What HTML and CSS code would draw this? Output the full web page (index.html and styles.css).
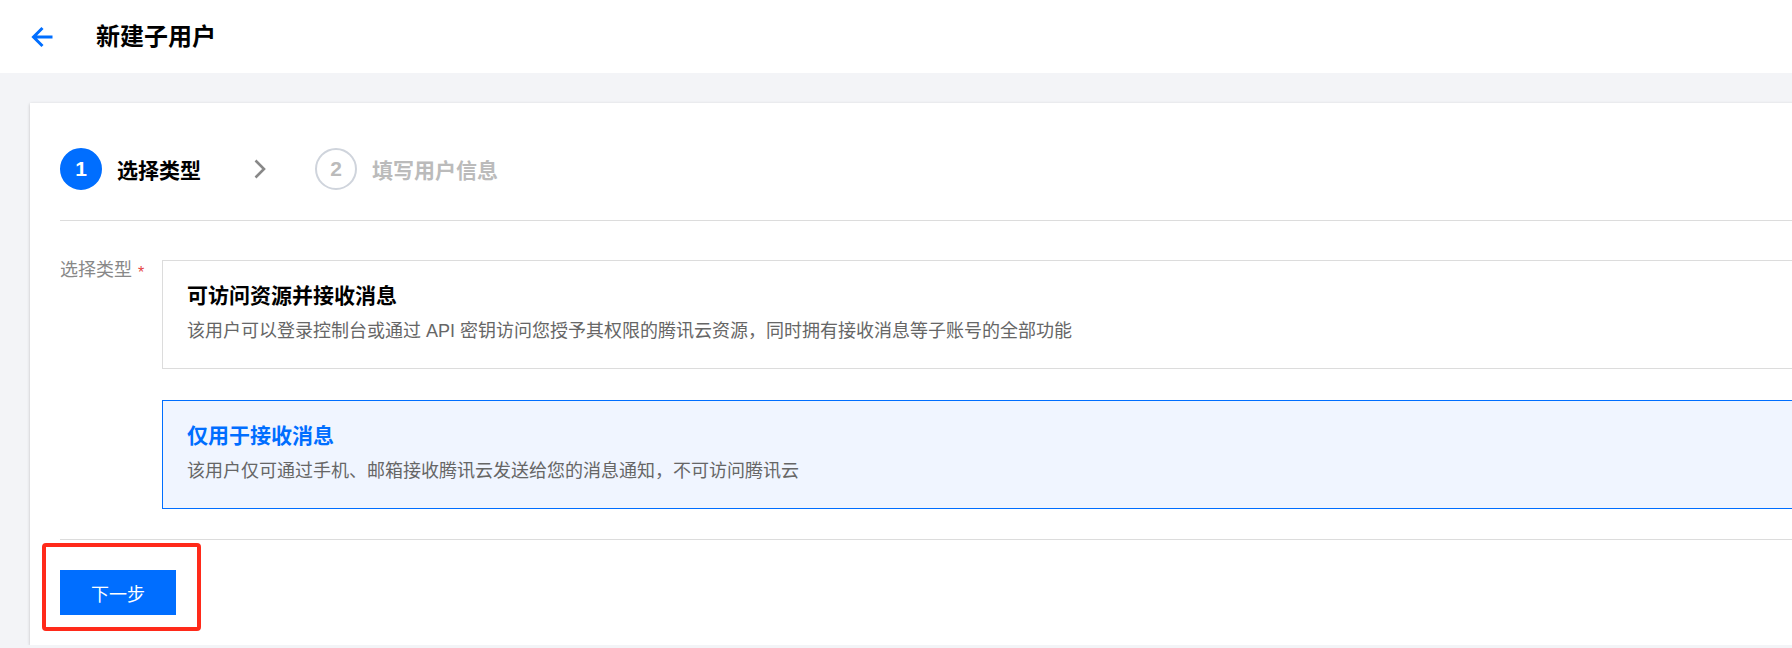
FILE: index.html
```html
<!DOCTYPE html>
<html lang="zh-CN">
<head>
    <meta charset="UTF-8">
    <meta name="viewport" content="width=device-width, initial-scale=1.0">
    <title>新建子用户</title>
    <link rel="stylesheet" href="styles.css">
</head>
<body>
    <div class="header">
        <svg class="back" width="22" height="22" viewBox="0 0 22 22">
            <path d="M21.5 11H3M11.5 2L2.5 11L11.5 20" fill="none" stroke="#006eff" stroke-width="3"/>
        </svg>
        <h1>新建子用户</h1>
    </div>
    <div class="main">
        <div class="card">
            <div class="steps">
                <div class="step active">
                    <span class="step-num">1</span>
                    <span class="step-label">选择类型</span>
                </div>
                <svg class="step-arrow" width="14" height="20" viewBox="0 0 14 20">
                    <path d="M2.5 1.5L11 10L2.5 18.5" fill="none" stroke="#888" stroke-width="2.6"/>
                </svg>
                <div class="step">
                    <span class="step-num">2</span>
                    <span class="step-label">填写用户信息</span>
                </div>
            </div>
            <div class="form">
                <div class="form-label">选择类型<span class="required">*</span></div>
                <div class="options">
                    <div class="option">
                        <div class="option-title">可访问资源并接收消息</div>
                        <div class="option-desc">该用户可以登录控制台或通过 API 密钥访问您授予其权限的腾讯云资源，同时拥有接收消息等子账号的全部功能</div>
                    </div>
                    <div class="option selected">
                        <div class="option-title">仅用于接收消息</div>
                        <div class="option-desc">该用户仅可通过手机、邮箱接收腾讯云发送给您的消息通知，不可访问腾讯云</div>
                    </div>
                </div>
            </div>
            <div class="footer">
                <button class="btn-primary">下一步</button>
                <div class="mark"></div>
            </div>
        </div>
    </div>
</body>
</html>
```

FILE: styles.css
```css
body {
    margin: 0;
    font-family: "Liberation Sans", "Noto Sans CJK SC", sans-serif;
    background-color: #f3f4f7;
    overflow: hidden;
}

.header {
    height: 73px;
    background-color: #fff;
    display: flex;
    align-items: center;
    padding-left: 31px;
}

.back {
    display: block;
    margin-top: 1px;
}

.header h1 {
    margin: 0 0 0 43px;
    font-size: 24px;
    font-weight: bold;
    line-height: 34px;
    color: #000;
}

.main {
    padding: 30px 0 0 30px;
}

.card {
    background-color: #fff;
    box-shadow: 0 1px 3px rgba(0, 0, 0, 0.22);
    padding-left: 30px;
    margin-right: -40px;
}

.steps {
    display: flex;
    align-items: center;
    height: 42px;
    padding: 45px 0 30px;
    border-bottom: 1px solid #dcdcdc;
}

.step {
    display: flex;
    align-items: center;
}

.step-num {
    box-sizing: border-box;
    width: 42px;
    height: 42px;
    border-radius: 50%;
    border: 2px solid #cfd4dc;
    display: flex;
    align-items: center;
    justify-content: center;
    font-size: 21px;
    font-weight: bold;
    color: #bbb;
}

.step-label {
    margin-left: 15px;
    font-size: 21px;
    font-weight: bold;
    color: #bbb;
}

.step.active .step-num {
    background-color: #006eff;
    border-color: #006eff;
    color: #fff;
}

.step.active .step-label {
    color: #000;
}

.step-arrow {
    display: block;
    margin: 0 48px 0 52px;
}

.form {
    display: flex;
    padding: 39px 0 30px;
}

.form-label {
    width: 102px;
    flex-shrink: 0;
    font-size: 18px;
    line-height: 21px;
    color: #888;
}

.required {
    color: #e54545;
    font-size: 16px;
    margin-left: 6px;
    vertical-align: top;
    position: relative;
    top: 2px;
}

.options {
    flex: 1;
}

.option {
    border: 1px solid #dcdcdc;
    padding: 20px 24px 23px;
}

.option + .option {
    margin-top: 31px;
}

.option-title {
    font-size: 21px;
    font-weight: bold;
    line-height: 30px;
    color: #000;
    margin-bottom: 7px;
}

.option-desc {
    font-size: 18px;
    line-height: 27px;
    color: #666;
}

.option.selected {
    border-color: #006eff;
    background-color: #f0f5ff;
}

.option.selected .option-title {
    color: #006eff;
}

.footer {
    position: relative;
    border-top: 1px solid #dcdcdc;
    padding: 30px 0;
}

.btn-primary {
    display: block;
    width: 116px;
    height: 45px;
    border: none;
    background-color: #006eff;
    color: #fff;
    font-family: inherit;
    font-size: 18px;
    padding: 0;
}

.mark {
    position: absolute;
    left: -18px;
    top: 3px;
    width: 159px;
    height: 88px;
    box-sizing: border-box;
    border: 4px solid #ff2a1a;
    border-radius: 4px;
}
```
